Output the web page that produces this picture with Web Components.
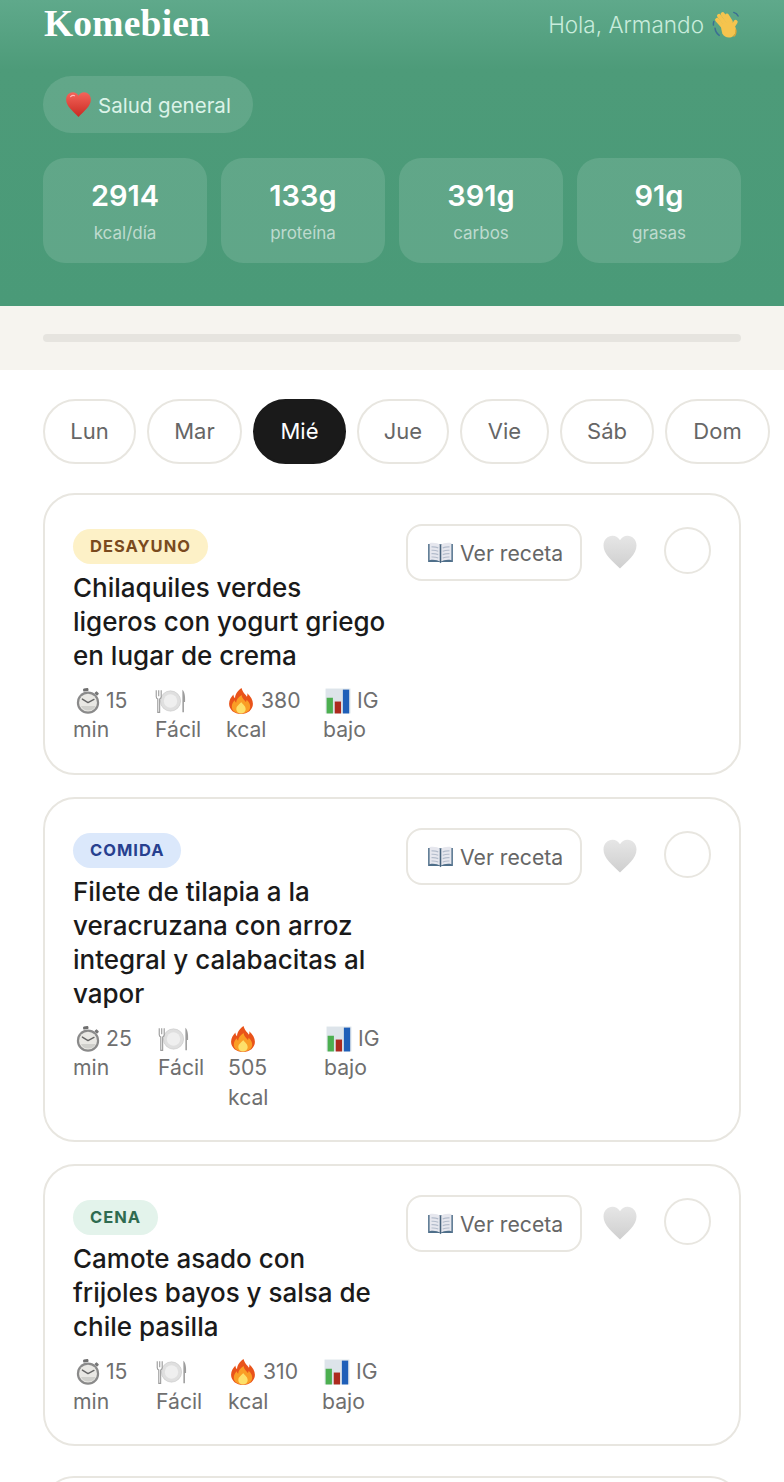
<!DOCTYPE html>
<html lang="es"><head><meta charset="utf-8"><title>Komebien</title>
<style>
html,body{margin:0;padding:0;background:#fff;height:1482px;overflow:hidden}
body{font-family:Inter,"Noto Sans",sans-serif;width:784px}
</style></head><body>
<k-app>
  <k-header slot="header" name="Armando"></k-header>
  <k-progress></k-progress>
  <k-days active="Mié"></k-days>
  <k-meals>
    <k-meal tag="DESAYUNO" tone="y" cols="82px 71px 97px 1fr" title-text="Chilaquiles verdes ligeros con yogurt griego en lugar de crema" a="15" b="380"></k-meal>
    <k-meal tag="COMIDA" tone="b" cols="85px 70px 96px 1fr" title-text="Filete de tilapia a la veracruzana con arroz integral y calabacitas al vapor" a="25" b="505"></k-meal>
    <k-meal tag="CENA" tone="g" cols="83px 72px 94px 1fr" title-text="Camote asado con frijoles bayos y salsa de chile pasilla" a="15" b="310"></k-meal>
    <k-meal class="peek" tag="" tone="y" cols="82px 71px 97px 1fr" title-text="" a="" b=""></k-meal>
  </k-meals>
</k-app>
<script>
const VB={plate:"0 0 30 24"};
const ICONS={
heart:`<defs><linearGradient id="hr" x1="0" y1="0" x2="0" y2="1"><stop offset="0" stop-color="#f4645a"/><stop offset="1" stop-color="#c92a22"/></linearGradient></defs><path d="M12 23C7 18 1 13.5 1 7.6 1 3.8 3.8 1.2 7 1.2c2.2 0 4 1.2 5 3 1-1.800 2.800-3 5-3 3.200 0 6 2.600 6 6.400C23 13.500 17 18 12 23z" fill="url(#hr)"/><path d="M5 5c1-1 2.500-1.300 3.500-.8" stroke="#fbb" stroke-width="1" fill="none" stroke-linecap="round"/>`,
gheart:`<defs><linearGradient id="hg" x1="0" y1="0" x2="0" y2="1"><stop offset="0" stop-color="#e6e6e6"/><stop offset="1" stop-color="#cfcfcf"/></linearGradient></defs><path d="M12 23C7 18 1 13.500 1 7.600 1 3.800 3.800 1.200 7 1.200c2.200 0 4 1.200 5 3 1-1.800 2.800-3 5-3 3.200 0 6 2.600 6 6.400C23 13.500 17 18 12 23z" fill="url(#hg)"/>`,
wave:`<path d="M2.500 15c.3 2.500 1.500 4.500 3.500 6M1.500 9.500c-.4 1-.5 2-.3 3M18 2c1.500.4 3 1.500 3.600 3" stroke="#3b6e94" stroke-width="1.200" fill="none" stroke-linecap="round"/><g stroke="#f5c44e" stroke-width="3.300" stroke-linecap="round" fill="none"><path d="M8.500 13 4.200 8.200"/><path d="M10.500 11 5.800 4.900"/><path d="M13 9.500 8.800 3.400"/><path d="M15.500 9.500 12.400 4.600"/><path d="M17 14l2.600-4.200"/></g><path d="M7 12.500l9-4 3.500 6c1 3.500-.5 6.500-3.500 8-3 1-6-.2-7.500-3z" fill="#f5c44e"/><path d="M17.800 22c1.600-1.200 2.300-3.500 1.900-6" stroke="#e3a52f" stroke-width="1" fill="none"/>`,
book:`<path d="M1 4.500h22V20.500H13l-1 1-1-1H1z" fill="#4f6f8a"/><path d="M2.300 3.500c3.800-.7 7.200 0 9.700 1.500 2.500-1.500 5.900-2.200 9.700-1.500V18.800c-3.800-.7-7.200 0-9.700 1.500-2.500-1.500-5.900-2.200-9.700-1.500z" fill="#e6e7ee"/><path d="M12 5v15.500" stroke="#46617a" stroke-width="1.400"/><path d="M4 7c2.200-.2 4 .1 6 .9M4 10c2.200-.2 4 .1 6 .9M4 13c2.200-.2 4 .1 6 .9M4 16c2.200-.2 4 .1 6 .9M20 7c-2.200-.2-4 .1-6 .9M20 10c-2.200-.2-4 .1-6 .9M20 13c-2.200-.2-4 .1-6 .9M20 16c-2.200-.2-4 .1-6 .9" stroke="#b3bccb" stroke-width="1" fill="none"/>`,
watch:`<rect x="7.500" y="0.300" width="5" height="2.800" rx="1" transform="rotate(-8 10 2)" fill="#6f6f6f"/><rect x="18.500" y="3.500" width="3.400" height="2.800" rx=".8" transform="rotate(45 20 4.800)" fill="#777"/><circle cx="12" cy="13.500" r="10.300" fill="#8a8a8a"/><circle cx="12" cy="13.500" r="8.300" fill="#e9e8e4"/><path d="M5.500 16.500A7.500 7.500 0 0 0 19 16.500z" fill="#cfcfcb"/><path d="M12 13.500 6.800 10.200M12 13.500l5.500-3" stroke="#666" stroke-width="1.300" stroke-linecap="round"/>`,
plate:`<circle cx="15" cy="12" r="9.800" fill="#dfdfdf" stroke="#c8c8c8" stroke-width=".6"/><circle cx="15" cy="12" r="6.500" fill="#efefef"/><path d="M1.200 1.500v6.500c0 1.200.8 1.900 1.500 2.100V23h1.800V10.100C5.200 9.900 6 9.200 6 8V1.500M3.600 1.500v6" stroke="#9d9d9d" stroke-width="1.100" fill="none"/><path d="M26.500 1c2 1.800 3 6 2.600 12H28V23h-1.500z" fill="#9d9d9d"/>`,
fire:`<path d="M12.500 0c1 4 3.300 5.500 5 8 .5-1 .6-2 .3-3.200C21 7.700 23 11 23 14.500 23 20 18.200 24 12 24S1 20 1 14.500c0-3.500 2-6.300 4-8.500.1 1.500.6 2.700 1.500 3.500C6.500 6 8.800 2.500 12.500 0z" fill="#e9531a"/><path d="M12.500 6.500c.4 3 2.600 4.500 4 6.500.5-.6.700-1.300.6-2.100C19.300 12.800 20.500 15 20.500 17.300 20.500 21 16.800 23.500 12 23.500S3.500 21 3.500 17.300c0-2.500 1.300-4.500 2.800-6 .1 1 .5 1.800 1.200 2.300C7.600 11 9.600 8.500 12.500 6.500z" fill="#fa9d25"/><path d="M12.300 13c.3 1.700 4 3.200 4 6.300 0 2.300-1.900 4.200-4.300 4.200S7.700 21.600 7.700 19.300c0-2.800 3.200-4.200 4.600-6.300z" fill="#fde06a"/>`,
chart:`<rect x="0.500" y="0.500" width="23" height="23" fill="#dde4ea"/><rect x="1.500" y="9" width="5.800" height="14.500" fill="#4caf50"/><rect x="9" y="12.500" width="5.800" height="11" fill="#ad2a1e"/><rect x="16.500" y="1.500" width="5.800" height="22" fill="#1f5fb8"/>`
};
function def(name,css,html){
  customElements.define(name,class extends HTMLElement{
    connectedCallback(){
      if(this.shadowRoot)return;
      const r=this.attachShadow({mode:"open"});
      r.innerHTML=`<style>${css}</style>`+(typeof html==="function"?html(this):html);
    }
  });
}
def("k-icon",":host{display:inline-block;vertical-align:middle;line-height:0}svg{display:block;width:100%;height:100%;overflow:visible}",
  el=>`<svg viewBox="${VB[el.getAttribute("name")]||"0 0 24 24"}" aria-hidden="true">${ICONS[el.getAttribute("name")]}</svg>`);
def("k-app",":host{display:block;width:784px;height:1482px;overflow:hidden;background:#fff}",`<slot name="header"></slot><slot></slot>`);
def("k-header",`:host{display:block;box-sizing:border-box;height:306px;padding:0 43px;background:linear-gradient(180deg,#5fa98b 0,#4d9b79 70px,#4a9a78 100%);color:#fff}
.top{display:flex;justify-content:space-between;align-items:center;height:48px}
.logo{font:700 37.500px/48px "Liberation Serif",serif;letter-spacing:.2px;margin-left:1px}
.hi{display:flex;align-items:center;gap:8px;font-size:22.500px;font-weight:300;color:#c8ecdc}
.hi k-icon{width:29px;height:29px}
.chip{display:inline-flex;align-items:center;gap:6px;box-sizing:border-box;height:57px;margin-top:28px;padding:0 22px;border-radius:29px;background:rgba(255,255,255,.12);font-size:20.500px;color:#dcf3e8}
.chip span{position:relative;top:1px}
.chip k-icon{width:27px;height:27px}
.stats{display:grid;grid-template-columns:repeat(4,1fr);gap:14px;margin-top:25px}
.stat{box-sizing:border-box;height:105px;border-radius:22px;background:rgba(255,255,255,.12);display:flex;flex-direction:column;align-items:center;padding-top:20px}
.n{font-size:29px;line-height:36px;font-weight:600}
.l{font-size:17px;line-height:20px;margin-top:9px;color:rgba(255,255,255,.6)}`,
el=>`<div class="top"><div class="logo">Komebien</div><div class="hi">Hola, ${el.getAttribute("name")} <k-icon name="wave"></k-icon></div></div>
<div class="chip"><k-icon name="heart"></k-icon><span>Salud general</span></div>
<div class="stats">${[["2914","kcal/día"],["133g","proteína"],["391g","carbos"],["91g","grasas"]].map(s=>`<div class="stat"><div class="n">${s[0]}</div><div class="l">${s[1]}</div></div>`).join("")}</div>`);
def("k-progress",`:host{display:block;box-sizing:border-box;height:64px;padding:28px 43px 0;background:#f6f4ef}
div{height:8px;border-radius:4px;background:#e6e4df}`,`<div></div>`);
def("k-days",`:host{display:flex;gap:11px;padding:29px 0 29px 43px;overflow:hidden;width:784px;box-sizing:border-box}
span{flex:none;box-sizing:border-box;height:65px;padding:0 0 2px;display:flex;align-items:center;justify-content:center;border:2px solid #e8e6e0;border-radius:33px;font-size:22px;color:#666;background:#fff}
.on{background:#1a1a1a;border-color:#1a1a1a;color:#fff}`,
el=>[["Lun",93],["Mar",95],["Mié",93],["Jue",92],["Vie",89],["Sáb",94],["Dom",105]].map(d=>`<span style="width:${d[1]}px" class="${d[0]===el.getAttribute("active")?"on":""}">${d[0]}</span>`).join(""));
def("k-meals",`:host{display:flex;flex-direction:column;gap:22px;padding:0 43px}::slotted(.peek){margin-top:8px}`,`<slot></slot>`);
def("k-meal",`:host{display:flex;box-sizing:border-box;border:2px solid #e8e6e0;border-radius:32px;padding:29px 28px 28.500px;background:#fff;min-height:60px}
.main{flex:none;width:333px;padding-top:5px}
.tag{display:inline-block;height:35px;line-height:35px;padding:0 17px;border-radius:18px;font-size:16.500px;font-weight:700;letter-spacing:1px}
.y{background:#fdf1c7;color:#7a4a1e}.b{background:#dbe8fb;color:#27408f}.g{background:#e3f3eb;color:#2f6b50}
h3{margin:7px 0 0;width:316px;font-size:26px;line-height:34px;font-weight:500;color:#1a1a1a}
.meta{display:grid;margin-top:13px;font-size:21.200px;line-height:29.250px;color:#6f6f6f}
.meta k-icon{width:26px;height:26px;margin:0 5px 0 2px;position:relative;top:-1px}
.meta k-icon[name=plate]{width:31px;margin:0}
.meta k-icon[name=fire]{margin:0 7px 0 2px}
.meta k-icon[name=chart]{margin:0 6px 0 2px}
.side{display:flex;align-items:flex-start;flex:1}
.btn{display:flex;align-items:center;gap:6px;box-sizing:border-box;width:176px;height:57px;padding-left:19px;border:2px solid #e8e6e0;border-radius:16px;font-size:21.200px;color:#666}
.btn k-icon{width:27px;height:27px;flex:none}
.like{width:36px;height:36px;margin:10px 26px 0 20px}
.check{box-sizing:border-box;width:47px;height:47px;border:2px solid #e8e6e0;border-radius:50%;margin-top:3px}`,
el=>{
 const g=n=>el.getAttribute(n);
 if(!g("tag"))return "";
 return `<div class="main"><span class="tag ${g("tone")}">${g("tag")}</span><h3>${g("title-text")}</h3>
 <div class="meta" style="grid-template-columns:${g("cols")}">
 <div><k-icon name="watch"></k-icon>${g("a")}<br>min</div>
 <div><k-icon name="plate"></k-icon><br>Fácil</div>
 <div><k-icon name="fire"></k-icon>${g("b")==="505"?"<br>505<br>kcal":g("b")+"<br>kcal"}</div>
 <div><k-icon name="chart"></k-icon>IG<br>bajo</div></div></div>
 <div class="side"><div class="btn"><k-icon name="book"></k-icon>Ver receta</div><k-icon class="like" name="gheart"></k-icon><div class="check"></div></div>`;
});
</script>
</body></html>
